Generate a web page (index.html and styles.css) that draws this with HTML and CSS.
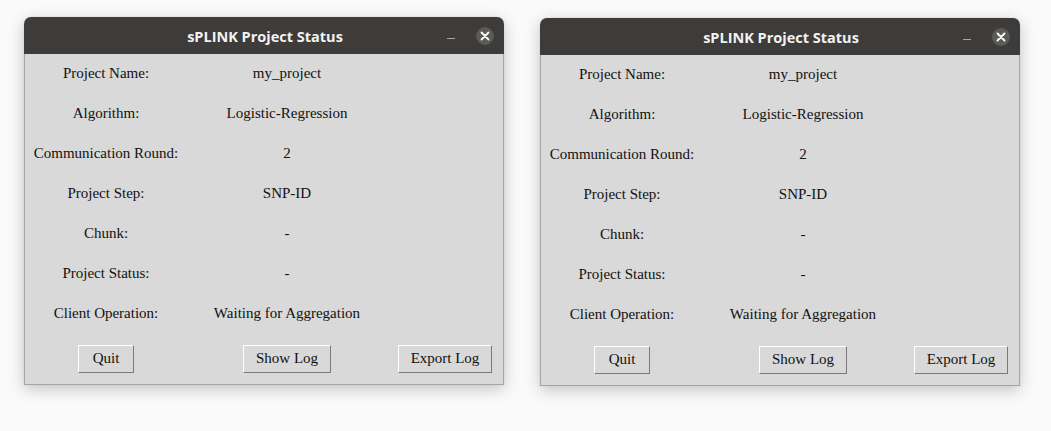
FILE: index.html
```html
<!DOCTYPE html>
<html>
<head>
<meta charset="utf-8">
<link rel="stylesheet" href="styles.css">
</head>
<body>
<div class="desktop">
  <div class="window">
    <div class="titlebar">
      <span class="title">sPLINK Project Status</span>
      <div class="controls">
        <span class="minimize"></span>
        <span class="close"><svg width="18" height="18" viewBox="0 0 18 18"><path d="M5.5 5.5 L12.5 12.5 M12.5 5.5 L5.5 12.5" stroke="#fff" stroke-width="1.8" stroke-linecap="round"/></svg></span>
      </div>
    </div>
    <div class="content">
      <div class="grid">
        <div class="cell">Project Name:</div><div class="cell">my_project</div><div class="cell"></div>
        <div class="cell">Algorithm:</div><div class="cell">Logistic-Regression</div><div class="cell"></div>
        <div class="cell">Communication Round:</div><div class="cell">2</div><div class="cell"></div>
        <div class="cell">Project Step:</div><div class="cell">SNP-ID</div><div class="cell"></div>
        <div class="cell">Chunk:</div><div class="cell">-</div><div class="cell"></div>
        <div class="cell">Project Status:</div><div class="cell">-</div><div class="cell"></div>
        <div class="cell">Client Operation:</div><div class="cell">Waiting for Aggregation</div><div class="cell"></div>
        <div class="cell btnrow"><button class="btn quit">Quit</button></div>
        <div class="cell btnrow"><button class="btn">Show Log</button></div>
        <div class="cell btnrow"><button class="btn">Export Log</button></div>
      </div>
    </div>
  </div>
  <div class="window second">
    <div class="titlebar">
      <span class="title">sPLINK Project Status</span>
      <div class="controls">
        <span class="minimize"></span>
        <span class="close"><svg width="18" height="18" viewBox="0 0 18 18"><path d="M5.5 5.5 L12.5 12.5 M12.5 5.5 L5.5 12.5" stroke="#fff" stroke-width="1.8" stroke-linecap="round"/></svg></span>
      </div>
    </div>
    <div class="content">
      <div class="grid">
        <div class="cell">Project Name:</div><div class="cell">my_project</div><div class="cell"></div>
        <div class="cell">Algorithm:</div><div class="cell">Logistic-Regression</div><div class="cell"></div>
        <div class="cell">Communication Round:</div><div class="cell">2</div><div class="cell"></div>
        <div class="cell">Project Step:</div><div class="cell">SNP-ID</div><div class="cell"></div>
        <div class="cell">Chunk:</div><div class="cell">-</div><div class="cell"></div>
        <div class="cell">Project Status:</div><div class="cell">-</div><div class="cell"></div>
        <div class="cell">Client Operation:</div><div class="cell">Waiting for Aggregation</div><div class="cell"></div>
        <div class="cell btnrow"><button class="btn quit">Quit</button></div>
        <div class="cell btnrow"><button class="btn">Show Log</button></div>
        <div class="cell btnrow"><button class="btn">Export Log</button></div>
      </div>
    </div>
  </div>
</div>
</body>
</html>
```
FILE: styles.css
```css
html, body {
  margin: 0;
  padding: 0;
  background: #fafafa;
  width: 1051px;
  height: 431px;
  overflow: hidden;
}
.desktop {
  display: flex;
  align-items: flex-start;
  gap: 36px;
  padding: 17px 0 0 24px;
}
.window {
  width: 480px;
  border-radius: 7px 7px 0 0;
  box-shadow: 0 4px 16px rgba(0,0,0,0.22), 0 0 1px rgba(0,0,0,0.3);
}
.second {
  margin-top: 1px;
}
.titlebar {
  height: 37px;
  background: #3d3c3a;
  border-radius: 7px 7px 0 0;
  display: flex;
  align-items: center;
  justify-content: center;
  position: relative;
}
.title {
  font-family: "Open Sans", "DejaVu Sans", sans-serif;
  font-weight: 700;
  font-size: 14.5px;
  color: #f2f2f2;
  padding-left: 2px;
  padding-top: 2px;
}
.controls {
  position: absolute;
  right: 10px;
  top: 10px;
  display: flex;
  align-items: center;
  gap: 21px;
}
.minimize {
  display: block;
  width: 8px;
  height: 1px;
  background: #a8a8a6;
  margin-top: 4px;
}
.close {
  display: flex;
  width: 18px;
  height: 18px;
  border-radius: 50%;
  background: #5b5a58;
}
.content {
  background: #d9d9d9;
  border: 1px solid #a6a6a6;
  border-top: none;
  font-family: "Liberation Serif", "Times New Roman", serif;
  font-size: 15px;
  color: #111;
}
.grid {
  display: grid;
  grid-template-columns: 162px 200px 1fr;
  grid-template-rows: repeat(7, 40px) 50px;
}
.cell {
  display: flex;
  align-items: center;
  justify-content: center;
  padding-bottom: 1px;
}
.btnrow {
  padding: 0 0 1px 0;
}
.btn {
  font-family: "Liberation Serif", "Times New Roman", serif;
  font-size: 15px;
  color: #111;
  background: #d9d9d9;
  height: 28px;
  padding: 0 12px;
  border: 1px solid;
  border-color: #ffffff #7a7a7a #7a7a7a #ffffff;
  border-radius: 0;
}
.quit {
  padding: 0 14px;
}
```
